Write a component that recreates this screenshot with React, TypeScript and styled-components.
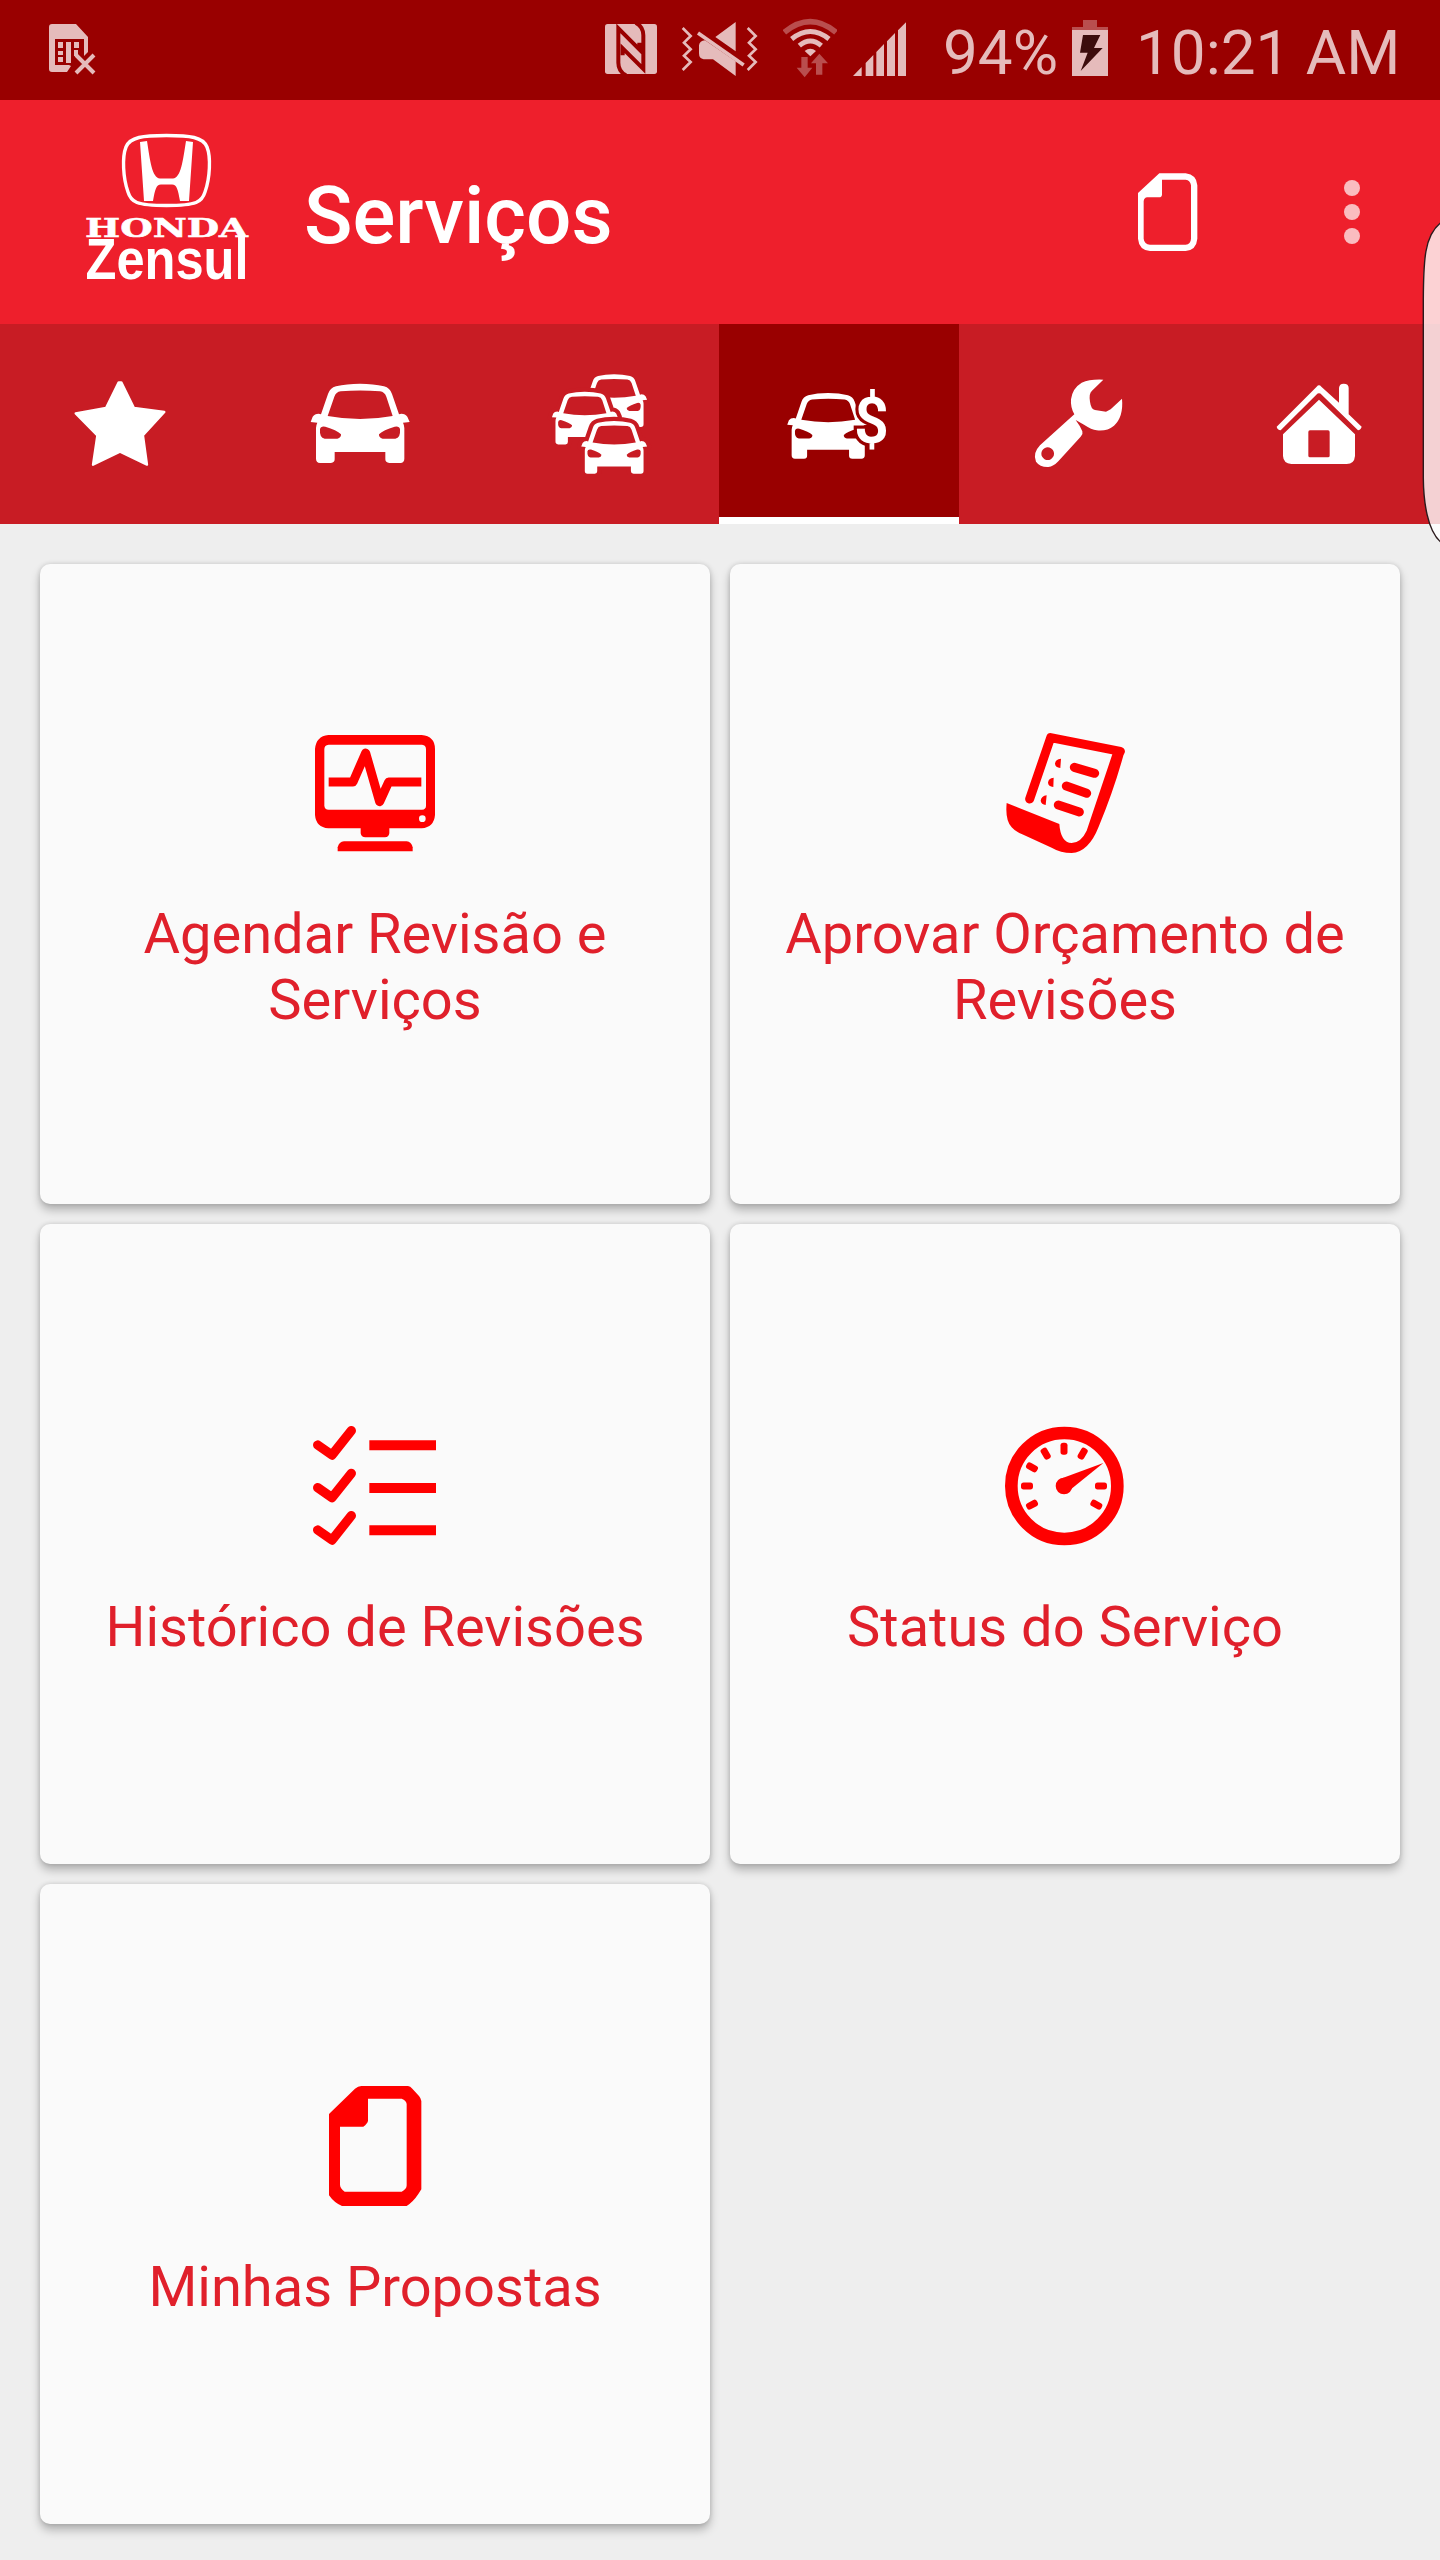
import React from "react";
import styled, { createGlobalStyle } from "styled-components";

const Global = createGlobalStyle`
  * { box-sizing: border-box; }
  body { margin: 0; background: #eeeeee; font-family: Roboto, "Liberation Sans", sans-serif; }
`;

const Screen = styled.div`
  position: relative;
  width: 1440px;
  height: 2560px;
  background: #eeeeee;
  overflow: hidden;
`;

const StatusBar = styled.header`
  display: flex;
  align-items: center;
  height: 100px;
  padding: 0 44px 0 49px;
  background: #990000;
  color: #e5bbbb;
`;

const Spacer = styled.div`
  flex: 1;
`;

const StatusIcon = styled.svg<{ $gap?: number }>`
  flex: none;
  height: 100px;
  margin-right: ${(p) => p.$gap ?? 0}px;
  fill: #e5bbbb;
`;

const StatusText = styled.span<{ $width: number; $gap?: number }>`
  flex: none;
  width: ${(p) => p.$width}px;
  margin-right: ${(p) => p.$gap ?? 0}px;
  font-size: 62px;
  line-height: 74px;
  padding-top: 6px;
  white-space: nowrap;
`;

const AppBar = styled.div`
  display: flex;
  align-items: flex-start;
  height: 224px;
  padding: 32px 80px 0 84px;
  background: #ee1f2c;
`;

const LogoMark = styled.svg`
  flex: none;
  width: 167px;
  height: 156px;
  overflow: visible;
  fill: #fff;
`;

const Title = styled.h1`
  margin: 37px 0 0 53px;
  font-size: 80px;
  font-weight: 500;
  line-height: 94px;
  color: #fff;
`;

const DocButton = styled.button`
  margin: 41px 146px 0 0;
  padding: 0;
  border: 0;
  background: none;
  display: block;
  width: 60px;
  height: 78px;
`;

const MenuButton = styled.button`
  display: flex;
  flex-direction: column;
  gap: 8px;
  margin-top: 48px;
  padding: 0;
  border: 0;
  background: none;
`;

const Dot = styled.i`
  width: 16px;
  height: 16px;
  border-radius: 50%;
  background: rgba(255, 255, 255, 0.7);
`;

const Tabs = styled.nav`
  display: grid;
  grid-template-columns: repeat(6, 240px);
  height: 200px;
  background: #c81c24;
`;

const Tab = styled.div<{ $active?: boolean }>`
  height: 200px;
  color: ${(p) => (p.$active ? "#990000" : "#c81c24")};
  background: ${(p) => (p.$active ? "#990000" : "transparent")};
  margin: ${(p) => (p.$active ? "0 1px 0 -1px" : "0")};
  box-shadow: ${(p) => (p.$active ? "inset 0 -7px 0 #fff" : "none")};
`;

const TabIcon = styled.svg`
  display: block;
  width: 240px;
  height: 200px;
  fill: #fff;
`;

const Grid = styled.main`
  display: grid;
  grid-template-columns: 670px 670px;
  grid-auto-rows: 640px;
  gap: 20px;
  padding: 40px;
`;

const Card = styled.section`
  display: flex;
  flex-direction: column;
  align-items: center;
  justify-content: center;
  gap: 48px;
  padding: 0 40px 2px;
  border-radius: 10px;
  background: #fafafa;
  box-shadow: 0 6px 10px rgba(0, 0, 0, 0.25), 0 0 5px rgba(0, 0, 0, 0.14);
`;

const CardIcon = styled.svg`
  flex: none;
  width: 120px;
  height: 120px;
  overflow: visible;
  fill: #ff0000;
`;

const CardLabel = styled.p`
  margin: 0;
  font-size: 56px;
  line-height: 66px;
  text-align: center;
  color: #e0202b;
`;

const EdgeHandle = styled.svg`
  position: absolute;
  left: 1420px;
  top: 216px;
  width: 20px;
  height: 332px;
`;

const CAR_BODY =
  "M932 306 L938 290 Q944 281 956 281 L963 283 L984 222 Q990 204 1008 199 Q1040 191 1080 191 Q1120 191 1152 199 Q1170 204 1176 222 L1197 283 L1204 281 Q1216 281 1222 290 L1229 306 L1209 308 Q1213 316 1213 324 V416 Q1213 428 1201 429 H1168 Q1156 428 1156 418 V396 H1004 V418 Q1004 428 993 429 H960 Q948 428 948 416 V324 Q948 316 952 308 Z";
const CAR_HOLES =
  "M983 288 L1003 230 Q1008 216 1022 214 Q1080 209 1140 214 Q1154 216 1159 230 L1178 288 Q1080 306 983 288Z M960 328 Q962 317 976 320 Q1010 330 1023 343 Q1024 353 1012 356 H974 Q958 354 960 328Z M1200 328 Q1198 317 1184 320 Q1150 330 1137 343 Q1136 353 1148 356 H1186 Q1202 354 1200 328Z";

const Car = ({ t, halo }: { t?: string; halo?: boolean }) => (
  <g transform={t}>
    {halo && (
      <path d={CAR_BODY} fill="currentColor" stroke="currentColor" strokeWidth={38} strokeLinejoin="round" />
    )}
    <path d={CAR_BODY + CAR_HOLES} fillRule="evenodd" />
  </g>
);

const Logo = () => (
  <LogoMark viewBox="84 132 167 156">
    <path
      d="M166.500 135.500 C190 135.500 203 137 207 147 C211 157 210 178 205 192 C202 202 197 205.500 166.500 205.500 C136 205.500 131 202 128 192 C123 178 122 157 126 147 C130 137 143 135.500 166.500 135.500Z"
      fill="none"
      stroke="#fff"
      strokeWidth="3.400"
    />
    <path d="M140 142 L147 141 C150 160 152 178 160 178.500 H173 C181 178 183 160 186 141 L193 142 L189 201 L180 201 C178 190 177 184.500 172 184.500 H161 C156 184.500 155 190 153 201 L144 201 Z" />
    <text
      x="85"
      y="237"
      fontFamily="DejaVu Serif"
      fontWeight="700"
      fontSize="26.500"
      textLength="163"
      lengthAdjust="spacingAndGlyphs"
      stroke="#fff"
      strokeWidth=".5"
    >
      HONDA
    </text>
    <text
      x="85.500"
      y="279"
      fontFamily="Liberation Sans"
      fontWeight="700"
      fontSize="57"
      textLength="163"
      lengthAdjust="spacingAndGlyphs"
    >
      Zensul
    </text>
  </LogoMark>
);

const tabs: React.ReactNode[] = [
  <TabIcon viewBox="0 12 720 600" key="star">
    <path
      d="M356 187 H364 L402 264 L493 276 L429 346 L441 434 L360 395 L279 434 L292 346 L227 280 L318 264Z"
      stroke="#fff"
      strokeWidth="7"
      strokeLinejoin="round"
    />
  </TabIcon>,
  <TabIcon viewBox="720 12 720 600" key="car">
    <Car />
  </TabIcon>,
  <TabIcon viewBox="0 12 720 600" key="cars">
    <Car t="translate(-316 36) scale(.665)" />
    <Car t="translate(-404 88) scale(.665)" halo />
    <Car t="translate(-316 176) scale(.665)" halo />
  </TabIcon>,
  <TabIcon viewBox="717 12 720 600" key="sell">
    <Car t="translate(150 61) scale(.828)" />
    <text
      x="1122"
      y="370"
      fontFamily="Roboto"
      fontWeight="600"
      fontSize="192"
      textLength="105"
      lengthAdjust="spacingAndGlyphs"
      stroke="currentColor"
      strokeWidth="20"
      paintOrder="stroke"
    >
      $
    </text>
  </TabIcon>,
  <TabIcon viewBox="0 12 720 600" key="wrench">
    <path
      fillRule="evenodd"
      d="M430 179 L396 212 Q386 220 390 245 Q393 268 405 270 L438 275 L452 268 L486 236 Q491 290 462 317 Q440 335 410 331 Q395 329 372 314 L347 300 Q360 317 367 334 Q370 342 362 350 L295 424 Q280 440 265 441 Q240 442 228 425 Q217 400 240 376 L343 283 Q331 262 333 238 Q337 205 365 188 Q390 177 430 179Z M263 382 a19 19 0 1 0 .1 0Z"
    />
  </TabIcon>,
  <TabIcon viewBox="720 12 720 600" key="house">
    <path d="M950 320 L1070 200 Q1077 192 1084 200 L1137 248 V204 Q1138 191 1151 191 Q1166 191 1166 204 V283 L1205 320 Q1202 330 1194 331 L1085 224 Q1077 216 1069 224 L962 331 Q952 330 950 320Z" />
    <path
      fillRule="evenodd"
      d="M1077 239 L1185 343 V408 Q1183 432 1160 432 H994 Q970 430 969 408 V343Z M1050 331 Q1045 331 1045 336 V407 Q1045 412 1050 412 H1104 Q1109 412 1109 407 V336 Q1109 331 1104 331Z"
    />
  </TabIcon>,
];

const ticks: [number, number, number][] = [
  [156, 314, -28],
  [141, 258, 0],
  [156, 202, 30],
  [197, 161, 60],
  [252, 146, 90],
  [308, 161, -60],
  [363, 258, 0],
  [349, 314, 30],
];

const cards: { label: string; icon: React.ReactNode }[] = [
  {
    label: "Agendar Revisão e Serviços",
    icon: (
      <CardIcon viewBox="105 69 360 360">
        <path
          fillRule="evenodd"
          d="M145 75 H425 Q465 79 465 117 V315 Q462 352 425 355 H328 V370 Q326 382 315 382 H256 Q244 382 242 370 V355 H145 Q108 352 105 315 V117 Q108 79 145 75Z M146 104 Q133 105 133 118 V287 Q134 299 146 299 H426 Q438 298 438 287 V118 Q438 105 426 104Z"
        />
        <circle cx="427" cy="326" r="10" fill="#fafafa" />
        <path d="M173 424 V412 Q177 395 192 394 H380 Q394 395 398 412 V424Z" />
        <path d="M146 216 H219 L257 129 L299 275 L326 216 H424" fill="none" stroke="#f00" strokeWidth="27" strokeLinejoin="round" />
      </CardIcon>
    ),
  },
  {
    label: "Aprovar Orçamento de Revisões",
    icon: (
      <CardIcon viewBox="75 69 360 360">
        <g fill="none" stroke="#f00" strokeWidth="27" strokeLinecap="round" strokeLinejoin="round">
          <path d="M149 267 L212 83 L421 124" />
          <path d="M283 172 L344 190 M259 228 L320 250 M235 285 L298 306" />
        </g>
        <path d="M80 279 L238 342 Q242 398 275 399 Q303 398 320 362 L400 124 L434 122 Q404 235 356 350 Q326 426 275 429 Q242 429 215 413 L130 374 Q105 364 95 352 Q75 330 80 279Z" />
        <path d="M243 146 Q226 148 225 161 Q226 172 241 174Z M221 203 Q205 205 204 218 Q205 229 220 231Z M200 256 Q184 258 182 272 Q184 283 197 285Z" />
      </CardIcon>
    ),
  },
  {
    label: "Histórico de Revisões",
    icon: (
      <CardIcon viewBox="75 78 360 360">
        {[0, 128, 255].map((y) => (
          <g key={y} transform={`translate(0 ${y})`}>
            <path d="M83 135 L126 165 L184 92" fill="none" stroke="#f00" strokeWidth="28" strokeLinecap="round" strokeLinejoin="round" />
            <path d="M238 121 H438 V151 H238Z" />
          </g>
        ))}
      </CardIcon>
    ),
  },
  {
    label: "Status do Serviço",
    icon: (
      <CardIcon viewBox="75 78 360 360">
        <circle cx="253" cy="258" r="159" fill="none" stroke="#f00" strokeWidth="38" />
        {ticks.map(([x, y, a]) => (
          <rect key={`${x}-${y}`} x={x - 18} y={y - 10.5} width="36" height="21" rx="8" transform={`rotate(${a} ${x} ${y})`} />
        ))}
        <circle cx="252" cy="258" r="25" />
        <path d="M248 234 L370 189 L269 271Z" />
      </CardIcon>
    ),
  },
  {
    label: "Minhas Propostas",
    icon: (
      <CardIcon viewBox="45 78 360 360">
        <path
          fillRule="evenodd"
          d="M184 78 H324 Q331 79 337 86 L357 108 Q363 115 364 123 V388 L355 402 Q340 425 320 438 H126 Q103 429 87 406 V162 L165 86 Q174 79 184 78Z M204 116 V182 Q203 190 190 200 H120 V374 Q120 384 134 395 H305 Q320 388 320 376 V132 Q319 122 305 116Z"
        />
      </CardIcon>
    ),
  },
];

export default function App() {
  return (
    <Screen>
      <Global />
      <StatusBar>
        <StatusIcon width="47" viewBox="49 0 47 100">
          <path d="M52 24 H76 L88 37 V52 L84 56 V39 H55 V65 H69 L71 66 L67 72 H52 Q49 72 49 69 V27 Q49 24 52 24Z" />
          <path d="M58 42h5v6h-5z M66 42h5v21h-5z M74 42h5v6h-5z M58 51h5v4h-5z M58 57h5v5h-5z M74 50h4v6h-4z" />
          <path d="M76 55 L94 73 M94 55 L76 73" stroke="#e5bbbb" strokeWidth="4" />
        </StatusIcon>
        <Spacer />
        <StatusIcon $gap={24} width="52" viewBox="75 0 156 300">
          <rect x="75" y="72" width="156" height="150" rx="8" />
          <path
            d="M138 226 Q115 214 115 188 V85 L178 148 V128 M167 68 Q190 80 190 106 V207 L128 145 V166"
            fill="none"
            stroke="#990000"
            strokeWidth="12"
          />
        </StatusIcon>
        <StatusIcon $gap={24} width="78" viewBox="302 0 234 300">
          <path
            d="M307 84 L331 108 L311 128 L331 148 L311 167 L331 186 L307 210 M502 84 L526 108 L506 128 L526 148 L506 167 L526 186 L502 210"
            fill="none"
            stroke="#e5bbbb"
            strokeWidth="8"
          />
          <path d="M405 111 L466 66 V154Z M374 121 L466 184 V228 L398 178 H370 Q356 176 356 160 V136 Q358 122 374 121Z" />
          <path d="M353 99 L490 195" stroke="#e5bbbb" strokeWidth="11" />
        </StatusIcon>
        <StatusIcon $gap={16} width="54" viewBox="609 0 162 300">
          <g fill="none" stroke="#e5bbbb">
            <path d="M613 97 Q691 33 768 97" strokeWidth="17" opacity=".42" />
            <path d="M635 117 Q691 72 747 117" strokeWidth="15" />
            <path d="M658 137 Q691 109 724 137" strokeWidth="15" />
          </g>
          <path d="M674 153 Q691 140 708 153 L691 169Z" />
          <path d="M664 171 H683 V203 H697 L674 232 L650 203 H664Z M718 161 L744 190 H727 V224 H708 V190 H693Z" opacity=".42" />
        </StatusIcon>
        <StatusIcon $gap={37} width="53" viewBox="819 0 159 300">
          <path d="M819 228 L845 201 V228Z M857 189 L880 165 V228 H857Z M889 156 L912 132 V228 H889Z M921 124 L945 99 V228 H921Z M954 91 L978 67 V228 H954Z" />
        </StatusIcon>
        <StatusText $width={114} $gap={15}>
          94%
        </StatusText>
        <StatusIcon $gap={28} width="36" viewBox="456 0 108 300">
          <path d="M456 90 H564 V228 H456Z" />
          <path d="M489 60 H531 V81 H564 V90 H456 V81 H489Z" opacity=".42" />
          <path d="M489 105 H541 L522 144 H548 L482 213 L503 158 H480Z" fill="#3c0c0c" />
        </StatusIcon>
        <StatusText $width={260}>10:21 AM</StatusText>
      </StatusBar>
      <AppBar>
        <Logo />
        <Title>Serviços</Title>
        <Spacer />
        <DocButton aria-label="Propostas">
          <svg width="60" height="78" viewBox="654 518 180 234" fill="#fff">
            <path
              fillRule="evenodd"
              d="M718 519 H797 Q830 523 832 555 V715 Q829 749 797 752 H690 Q657 749 654 715 V578 Z M726 538 V583 Q725 591 717 591 H682 Q672 592 671 603 V715 Q673 732 690 733 H797 Q812 732 813 715 V555 Q811 540 797 538Z"
            />
          </svg>
        </DocButton>
        <MenuButton aria-label="Menu">
          <Dot />
          <Dot />
          <Dot />
        </MenuButton>
      </AppBar>
      <Tabs>
        {tabs.map((icon, i) => (
          <Tab key={i} $active={i === 3}>
            {icon}
          </Tab>
        ))}
      </Tabs>
      <Grid>
        {cards.map((c) => (
          <Card key={c.label}>
            {c.icon}
            <CardLabel>{c.label}</CardLabel>
          </Card>
        ))}
      </Grid>
      <EdgeHandle viewBox="1420 216 20 332">
        <path
          d="M1442 222 C1424 234 1423.500 262 1423.300 300 V478 C1423.500 500 1427 532 1442 543Z"
          fill="rgba(255,255,255,.8)"
          stroke="#2b1a1c"
          strokeWidth="1.400"
        />
      </EdgeHandle>
    </Screen>
  );
}
